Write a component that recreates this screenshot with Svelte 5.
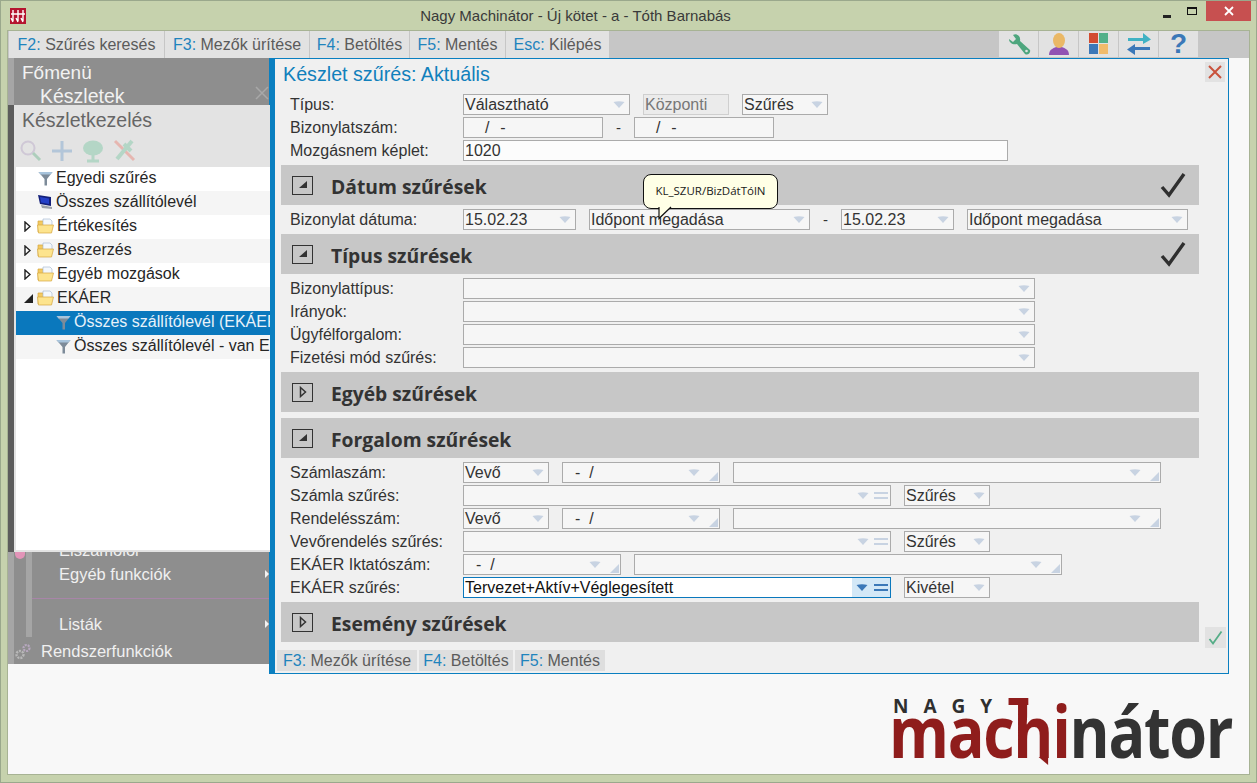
<script>
  const tree = [
    { t: 'Egyedi szűrés', icon: 'funnel', indent: 0 },
    { t: 'Összes szállítólevél', icon: 'pc', indent: 0 },
    { t: 'Értékesítés', icon: 'folder', arrow: 'r', indent: 0 },
    { t: 'Beszerzés', icon: 'folder', arrow: 'r', indent: 0 },
    { t: 'Egyéb mozgások', icon: 'folder', arrow: 'r', indent: 0 },
    { t: 'EKÁER', icon: 'folder', arrow: 'd', indent: 0 },
    { t: 'Összes szállítólevél (EKÁER)', icon: 'funnel', indent: 1, sel: true },
    { t: 'Összes szállítólevél - van EKÁER', icon: 'funnel', indent: 1 }
  ];
  const topKeys = [
    ['F2:', 'Szűrés keresés'],
    ['F3:', 'Mezők ürítése'],
    ['F4:', 'Betöltés'],
    ['F5:', 'Mentés'],
    ['Esc:', 'Kilépés']
  ];
  const bottomKeys = [
    ['F3:', 'Mezők ürítése'],
    ['F4:', 'Betöltés'],
    ['F5:', 'Mentés']
  ];
</script>

{#snippet dd()}
  <svg class="dd" width="12" height="7" viewBox="0 0 12 7"><path d="M0.5 1 Q6 -0.5 11.5 1 L6 7 Z" /></svg>
{/snippet}
{#snippet corner()}
  <svg class="corner" width="9" height="9" viewBox="0 0 9 9"><path d="M9 0 V9 H0 Z" /></svg>
{/snippet}
{#snippet eq()}
  <svg class="eq" width="14" height="7" viewBox="0 0 14 7"><path d="M0 0 H14 V2 H0 Z M0 5 H14 V7 H0 Z" /></svg>
{/snippet}

{#snippet field(w, text = '', opts = {})}
  <div class="field {w}" class:pad={opts.pad} class:pad2={opts.pad2} class:dis={opts.dis} class:white={opts.white}>
    <span class="val">{text}</span>
    {#if opts.dd}{@render dd()}{/if}
    {#if opts.eq}{@render eq()}{/if}
    {#if opts.corner}{@render corner()}{/if}
  </div>
{/snippet}

{#snippet bar(title, open, check)}
  <div class="bar">
    <span class="toggle">
      {#if open}
        <svg width="10" height="8" viewBox="0 0 10 8"><path d="M9 0 V7 H1 Z" fill="#333" /></svg>
      {:else}
        <svg width="8" height="12" viewBox="0 0 8 12"><path d="M1.5 1.5 L6.5 6 L1.5 10.5 Z" fill="none" stroke="#333" stroke-width="1.5" /></svg>
      {/if}
    </span>
    <span class="bar-title">{title}</span>
    {#if check}
      <svg class="bar-check" width="26" height="26" viewBox="0 0 26 26"><path d="M2 15 L9 23 L24 2" fill="none" stroke="#2f2f2f" stroke-width="3.4" /></svg>
    {/if}
  </div>
{/snippet}

{#snippet funnel()}
  <svg class="ti fn" width="15" height="15" viewBox="0 0 15 15">
    <path d="M0.5 1 H14.5 L9 8 V14.5 H6.5 V8 Z" fill="#7d8b99" />
    <path d="M0.5 1 H14.5 L12.5 3.5 H2.5 Z" fill="#a8c4dc" />
  </svg>
{/snippet}
{#snippet pc()}
  <svg class="ti" width="16" height="16" viewBox="0 0 16 16">
    <path d="M1 1 L14 3 V12 L3 10 Z" fill="#14207a" />
    <path d="M3 3 L12 4.5 V10 L4 8.5 Z" fill="#2540c8" />
    <path d="M4 11 L15 13 V15 L5 14 Z" fill="#9aa0a8" />
  </svg>
{/snippet}
{#snippet folder()}
  <svg class="ti" width="17" height="16" viewBox="0 0 17 16">
    <path d="M1 3 H6 L7 5 H14 V14 H1 Z" fill="#f3c960" stroke="#d5a640" stroke-width="0.7" />
    <path d="M6 1 H13 L15 3 V9 H6 Z" fill="#f4f8fc" stroke="#9db4cc" stroke-width="0.6" />
    <path d="M0.5 7 H16.5 L14.5 15 H1.5 Z" fill="#fde48e" stroke="#d5a640" stroke-width="0.7" />
  </svg>
{/snippet}

<div class="window">
  <header class="titlebar">
    <svg class="appicon" width="16" height="16" viewBox="0 0 16 16">
      <rect width="16" height="16" fill="#b5142f" />
      <path d="M3 2 V13 M8 2 V13 M13 2 V13 M1 6 H15 M1 10 L3 14 M6 10 L8 14 M11 10 L13 14" stroke="#fff" stroke-width="1.4" fill="none" />
    </svg>
    <span class="wintitle">Nagy Machinátor - Új kötet - a - Tóth Barnabás</span>
    <div class="winbtns">
      <span class="wb min"></span>
      <span class="wb max"></span>
      <span class="wb close">
        <svg width="10" height="10" viewBox="0 0 10 10"><path d="M1 1 L9 9 M9 1 L1 9" stroke="#fff" stroke-width="1.8" /></svg>
      </span>
    </div>
  </header>

  <div class="client">
    <nav class="toolbar">
      {#each topKeys as k}
        <span class="key"><b>{k[0]}</b> {k[1]}</span>
      {/each}
      <div class="tools">
        <span class="tool">
          <svg width="26" height="26" viewBox="0 0 26 26"><path d="M3 8 L7 11 L10 8 L7 4 C11 2 15 5 14 10 L24 19 C25 21 22 25 19 23 L11 13 C7 14 3 12 3 8 Z" fill="#4ea67e" /><circle cx="20.5" cy="20" r="1.3" fill="#e2e2e2" /></svg>
        </span>
        <span class="tool">
          <svg width="24" height="24" viewBox="0 0 24 24"><path d="M2 23 C2 17 7 16 9 15 H15 C17 16 22 17 22 23 Z" fill="#9152b3" /><ellipse cx="12" cy="8.5" rx="6" ry="7.5" fill="#eab866" /></svg>
        </span>
        <span class="tool">
          <svg width="24" height="24" viewBox="0 0 24 24"><rect x="2" y="1" width="9" height="10" fill="#d24b30" /><rect x="12" y="1" width="9" height="10" fill="#52b08a" /><rect x="2" y="12" width="9" height="10" fill="#3b78b8" /><rect x="12" y="12" width="9" height="10" fill="#f1bb6b" /></svg>
        </span>
        <span class="tool">
          <svg width="26" height="24" viewBox="0 0 26 24"><path d="M2 6 H17 V1 L25 7.5 L17 12 V9 H2 Z" fill="#3fb2c4" /><path d="M24 15 H9 V12 L1 17.5 L9 23 V18 H24 Z" fill="#3b78b8" /></svg>
        </span>
        <span class="tool q">?</span>
      </div>
    </nav>

    <main class="body">
      <aside class="sidebar">
        <div class="menu-top">
          <div class="mt1">Főmenü</div>
          <div class="mt2">Készletek</div>
          <svg class="menu-x" width="14" height="14" viewBox="0 0 14 14"><path d="M1 1 L13 13 M13 1 L1 13" stroke="#a8a8a8" stroke-width="1.5" /></svg>
        </div>
        <section class="panel">
          <div class="panel-head">Készletkezelés</div>
          <div class="panel-tools">
            <svg width="24" height="24" viewBox="0 0 24 24"><circle cx="9" cy="9" r="6.5" fill="none" stroke="#c9bfd2" stroke-width="2" /><path d="M14 14 L21 21" stroke="#9cc8b0" stroke-width="3" /></svg>
            <svg width="24" height="24" viewBox="0 0 24 24"><path d="M12 2 V22 M2 12 H22" stroke="#a3bdd6" stroke-width="3" /></svg>
            <svg width="24" height="24" viewBox="0 0 24 24"><ellipse cx="12" cy="9" rx="10" ry="7.5" fill="#a5d2bd" /><path d="M12 12 V21 M6 22 H18" stroke="#a5d2bd" stroke-width="3" /></svg>
            <svg width="24" height="24" viewBox="0 0 24 24"><path d="M3 2 L22 21" stroke="#e8a8a0" stroke-width="3" /><path d="M20 2 L5 20 M12 5 L19 12" stroke="#a5d2bd" stroke-width="4" /></svg>
          </div>
          <ul class="tree">
            {#each tree as n}
              <li class="node" class:sel={n.sel} class:ind={n.indent}>
                <span class="tw">
                  {#if n.arrow === 'r'}
                    <svg width="7" height="11" viewBox="0 0 7 11"><path d="M1 1 L6 5.5 L1 10 Z" fill="#fff" stroke="#222" stroke-width="1.4" /></svg>
                  {:else if n.arrow === 'd'}
                    <svg width="9" height="9" viewBox="0 0 9 9"><path d="M9 0 V9 H0 Z" fill="#222" /></svg>
                  {/if}
                </span>
                {#if n.icon === 'funnel'}{@render funnel()}{:else if n.icon === 'pc'}{@render pc()}{:else}{@render folder()}{/if}
                <span class="nt">{n.t}</span>
              </li>
            {/each}
          </ul>
        </section>
        <div class="menu-bottom">
          <div class="strip"></div>
          <div class="mb clipped">Elszámolói</div>
          <div class="mb first">Egyéb funkciók <i class="tri"></i></div>
          <div class="sep"></div>
          <div class="mb">Listák <i class="tri"></i></div>
          <div class="mb root">
            <svg width="16" height="17" viewBox="0 0 16 17"><circle cx="5" cy="11.5" r="3.5" fill="none" stroke="#b8b8b8" stroke-width="2.4" stroke-dasharray="2 1" /><circle cx="11.5" cy="5" r="3" fill="none" stroke="#b8a8c0" stroke-width="2.2" stroke-dasharray="2 1" /></svg>
            <span>Rendszerfunkciók</span>
          </div>
          <span class="pink"></span>
        </div>
      </aside>

      <div class="logo">
        <div class="logo-nagy">NAGY</div>
        <div class="logo-word"><span class="red">mac<span class="hh">h</span>i</span>nátor</div>
      </div>
    </main>

    <section class="dialog">
      <h1 class="dlg-title">Készlet szűrés: Aktuális</h1>
      <span class="dlg-x">
        <svg width="14" height="14" viewBox="0 0 14 14"><path d="M1 1 L13 13 M13 1 L1 13" stroke="#c9523c" stroke-width="2" /></svg>
      </span>
      <span class="dlg-ok">
        <svg width="15" height="15" viewBox="0 0 15 15"><path d="M1.5 9 L5 13.5 L13.5 1.5" fill="none" stroke="#55ad87" stroke-width="1.8" /></svg>
      </span>

      <div class="form">
        <div class="row">
          <label>Típus:</label>
          {@render field('w167', 'Választható', { dd: true })}
          {@render field('w86', 'Központi', { dis: true })}
          {@render field('w86', 'Szűrés', { dd: true })}
        </div>
        <div class="row">
          <label>Bizonylatszám:</label>
          {@render field('w140', '/  -', { pad2: true })}
          <span class="dash">-</span>
          {@render field('w140', '/  -', { pad2: true })}
        </div>
        <div class="row">
          <label>Mozgásnem képlet:</label>
          {@render field('w545', '1020', { white: true })}
        </div>

        {@render bar('Dátum szűrések', true, true)}
        <div class="row">
          <label>Bizonylat dátuma:</label>
          {@render field('w113', '15.02.23', { dd: true })}
          {@render field('w221', 'Időpont megadása', { dd: true })}
          <span class="dash">-</span>
          {@render field('w113', '15.02.23', { dd: true })}
          {@render field('w221', 'Időpont megadása', { dd: true })}
        </div>

        {@render bar('Típus szűrések', true, true)}
        {#each ['Bizonylattípus:', 'Irányok:', 'Ügyfélforgalom:', 'Fizetési mód szűrés:'] as l}
          <div class="row">
            <label>{l}</label>
            {@render field('w572', '', { dd: true })}
          </div>
        {/each}

        {@render bar('Egyéb szűrések', false, false)}
        {@render bar('Forgalom szűrések', true, false)}

        <div class="row">
          <label>Számlaszám:</label>
          {@render field('w86', 'Vevő', { dd: true })}
          {@render field('w158', '-  /', { dd: true, corner: true, pad: true })}
          {@render field('w428', '', { dd: true, corner: true })}
        </div>
        <div class="row">
          <label>Számla szűrés:</label>
          {@render field('w428', '', { dd: true, eq: true })}
          {@render field('w86', 'Szűrés', { dd: true })}
        </div>
        <div class="row">
          <label>Rendelésszám:</label>
          {@render field('w86', 'Vevő', { dd: true })}
          {@render field('w158', '-  /', { dd: true, corner: true, pad: true })}
          {@render field('w428', '', { dd: true, corner: true })}
        </div>
        <div class="row">
          <label>Vevőrendelés szűrés:</label>
          {@render field('w428', '', { dd: true, eq: true })}
          {@render field('w86', 'Szűrés', { dd: true })}
        </div>
        <div class="row">
          <label>EKÁER Iktatószám:</label>
          {@render field('w158', '-  /', { dd: true, corner: true, pad: true })}
          {@render field('w428', '', { dd: true, corner: true })}
        </div>
        <div class="row">
          <label>EKÁER szűrés:</label>
          <div class="field w428 active">
            <span class="val">Tervezet+Aktív+Véglegesített</span>
            <span class="act-btns">
              {@render dd()}
              {@render eq()}
            </span>
          </div>
          {@render field('w86', 'Kivétel', { dd: true })}
        </div>

        {@render bar('Esemény szűrések', false, false)}
      </div>

      <div class="dlg-keys">
        {#each bottomKeys as k}
          <span class="key small"><b>{k[0]}</b> {k[1]}</span>
        {/each}
      </div>

      <div class="tooltip">
        KL_SZUR/BizDátTólN
        <svg class="tail" width="16" height="13" viewBox="0 0 16 13"><path d="M1 0 V11.5 L13 0" fill="#ffffe6" stroke="#111" stroke-width="1.2" /></svg>
      </div>
    </section>
  </div>
</div>

<style>
  :global(body) {
    margin: 0;
    background: #c6d2ad;
    font-family: "Liberation Sans", Arial, sans-serif;
  }
  .window {
    width: 1257px;
    height: 783px;
    box-sizing: border-box;
    border: 1px solid #9aa88c;
    background: #c6d2ad;
    padding: 0 6px 7px;
    display: flex;
    flex-direction: column;
    overflow: hidden;
  }
  .titlebar {
    height: 29px;
    flex: none;
    position: relative;
    display: flex;
    align-items: flex-start;
    justify-content: center;
    padding-right: 106px;
  }
  .appicon {
    position: absolute;
    left: 3px;
    top: 7px;
  }
  .wintitle {
    font-size: 15px;
    line-height: 30px;
    color: #3a3a3a;
  }
  .winbtns {
    position: absolute;
    right: -1px;
    top: 0;
    display: flex;
    align-items: center;
  }
  .wb {
    display: block;
    flex: none;
  }
  .min {
    width: 8px;
    height: 3px;
    background: #222;
    margin: 11px 16px 0 0;
  }
  .max {
    width: 8px;
    height: 5px;
    border: 1px solid #111;
    border-top-width: 2px;
    margin: 0 9px 0 0;
  }
  .close {
    width: 45px;
    height: 20px;
    background: #c75050;
    display: flex;
    align-items: center;
    justify-content: center;
  }
  .client {
    flex: 1;
    position: relative;
    background: #f8f8f8;
    border: 1px solid #a7b394;
    min-height: 0;
    display: flex;
    flex-direction: column;
  }
  .toolbar {
    height: 27px;
    flex: none;
    background: #c6c6c6;
    display: grid;
    grid-template-columns: 155px 144px 99px 95px 103px;
    gap: 1px;
    padding-left: 1px;
    align-items: stretch;
  }
  .key {
    background: #e2e2e2;
    font-size: 16px;
    line-height: 27px;
    text-align: center;
    color: #5b5b5b;
    white-space: nowrap;
    display: block;
  }
  .key b {
    font-weight: normal;
    color: #1f84bd;
  }
  .tools {
    position: absolute;
    left: 991px;
    top: 0;
    height: 27px;
    display: flex;
    gap: 1px;
  }
  .tool {
    width: 39px;
    height: 26px;
    background: #e2e2e2;
    display: flex;
    align-items: center;
    justify-content: center;
  }
  .q {
    font-size: 28px;
    font-weight: bold;
    color: #3b78b8;
  }
  .body {
    flex: 1;
    display: flex;
    min-height: 0;
  }
  .sidebar {
    width: 262px;
    height: 606px;
    flex: none;
    display: flex;
    flex-direction: column;
    background: #8e8e8e;
    overflow: hidden;
  }
  .menu-top {
    height: 47px;
    flex: none;
    border-left: 6px solid #a6a6a6;
    position: relative;
    color: #f2f2f2;
    font-size: 19px;
    overflow: hidden;
  }
  .mt1 {
    padding-left: 8px;
    line-height: 24px;
    margin-top: 3px;
  }
  .mt2 {
    padding-left: 26px;
    line-height: 22px;
    font-size: 19.5px;
  }
  .menu-x {
    position: absolute;
    left: 241px;
    top: 28px;
  }
  .panel {
    height: 447px;
    flex: none;
    background: #e3e3e3;
    border-left: 6px solid #5c5c5c;
    padding-bottom: 2px;
    box-sizing: border-box;
    display: flex;
    flex-direction: column;
    position: relative;
    z-index: 1;
  }
  .panel-head {
    font-size: 19.5px;
    color: #666;
    padding-left: 8px;
    line-height: 30px;
  }
  .panel-tools {
    height: 32px;
    display: flex;
    align-items: center;
    gap: 7px;
    padding-left: 5px;
  }
  .panel-tools svg {
    opacity: 0.75;
  }
  .tree {
    flex: 1;
    margin: 0 0 0 2px;
    padding: 0;
    list-style: none;
    background: #fff;
    overflow: hidden;
  }
  .node {
    height: 24px;
    box-sizing: border-box;
    padding-bottom: 2px;
    display: flex;
    align-items: center;
    white-space: nowrap;
    font-size: 16px;
    color: #262626;
  }
  .node:nth-child(even) {
    background: #f5f5f5;
  }
  .node.sel {
    background: #0a78bd;
    color: #e8f2fa;
  }
  .tw {
    width: 21px;
    flex: none;
    display: flex;
    box-sizing: border-box;
    padding-left: 8px;
    justify-content: flex-start;
  }
  .node.ind .tw {
    width: 39px;
  }
  .ti {
    flex: none;
    margin-right: 3px;
  }
  .fn {
    margin-left: 1px;
  }
  .menu-bottom {
    flex: 1;
    position: relative;
    border-left: 6px solid #a6a6a6;
    color: #f0f0f0;
    font-size: 16.5px;
  }
  .strip {
    position: absolute;
    left: 12px;
    top: 0;
    width: 6px;
    height: 85px;
    background: #a5a5a5;
  }
  .mb {
    padding-left: 45px;
    line-height: 22px;
    position: relative;
  }
  .clipped {
    position: absolute;
    left: 0;
    top: -13px;
  }
  .first {
    margin-top: 11px;
  }
  .tri {
    position: absolute;
    left: 251px;
    top: 7px;
    border-left: 4px solid #f2f2f2;
    border-top: 4px solid transparent;
    border-bottom: 4px solid transparent;
  }
  .sep {
    height: 1px;
    margin: 13px 0 14px 18px;
    background: #a885a8;
  }
  .root {
    margin-top: 5px;
    padding-left: 1px;
    display: flex;
    align-items: center;
    gap: 10px;
  }
  .pink {
    position: absolute;
    left: 1px;
    top: 0;
    width: 10px;
    height: 7px;
    background: #e294b8;
    border-radius: 0 0 5px 5px;
  }
  .logo {
    margin-left: auto;
    margin-right: 16px;
    margin-bottom: 7px;
    align-self: flex-end;
    color: #333;
    font-family: "Open Sans", sans-serif;
    position: relative;
    width: 340px;
  }
  .logo-nagy {
    font-weight: 700;
    font-size: 19px;
    line-height: 18px;
    letter-spacing: 15px;
    color: #2f2f2f;
    margin-bottom: -20px;
  }
  .logo-word {
    font-size: 71px;
    font-weight: 700;
    line-height: 72px;
    letter-spacing: -1.5px;
    white-space: nowrap;
    margin-left: -4px;
    transform: scaleX(0.86);
    transform-origin: left center;
  }
  .red {
    color: #8f1d1c;
  }
  .hh {
    position: relative;
  }
  .hh::before {
    content: "";
    position: absolute;
    left: -6px;
    top: 16px;
    width: 23px;
    height: 7px;
    background: #8f1d1c;
  }
  .hh::after {
    content: "";
    position: absolute;
    left: 29px;
    bottom: 14px;
    width: 0;
    height: 0;
    border-right: 11px solid #8f1d1c;
    border-bottom: 8px solid transparent;
  }
  .dialog {
    position: absolute;
    left: 261px;
    top: 27px;
    width: 960px;
    height: 616px;
    box-sizing: border-box;
    background: #f0f0f0;
    border: 1px solid #0a7fc0;
    border-left-width: 6px;
    display: flex;
    flex-direction: column;
  }
  .dlg-title {
    margin: 0;
    height: 30px;
    padding-left: 8px;
    font-weight: normal;
    font-size: 19.7px;
    line-height: 30px;
    color: #1180bc;
    flex: none;
  }
  .dlg-x {
    position: absolute;
    right: 3px;
    top: 3px;
    width: 20px;
    height: 20px;
    background: #e2e2e2;
    display: flex;
    align-items: center;
    justify-content: center;
  }
  .dlg-ok {
    position: absolute;
    right: 2px;
    top: 568px;
    width: 21px;
    height: 21px;
    background: #e2e2e2;
    display: flex;
    align-items: center;
    justify-content: center;
  }
  .form {
    padding-left: 6px;
    width: 918px;
    box-sizing: content-box;
    margin-top: 5px;
    flex: none;
  }
  .row {
    height: 23px;
    display: flex;
    align-items: flex-start;
    gap: 13px;
    padding-left: 9px;
  }
  .row label {
    width: 173px;
    margin-right: -13px;
    font-size: 16px;
    line-height: 21px;
    color: #333;
    flex: none;
    white-space: nowrap;
  }
  .field {
    height: 21px;
    box-sizing: border-box;
    border: 1px solid #ababab;
    background: #f6f6f6;
    font-size: 16px;
    line-height: 19px;
    color: #333;
    padding-left: 1px;
    display: flex;
    align-items: center;
    flex: none;
    position: relative;
    white-space: pre;
  }
  .val {
    flex: 1;
    min-width: 0;
  }
  .pad .val {
    padding-left: 11px;
  }
  .pad2 .val {
    padding-left: 20px;
    word-spacing: 1px;
  }
  .field.white {
    background: #fcfcfc;
  }
  .field.dis {
    background: #ebebeb;
    border-color: #cfcfcf;
    color: #777;
  }
  .field.active {
    background: #fff;
    border-color: #0a78bd;
    color: #111;
  }
  .act-btns {
    align-self: stretch;
    background: #d3e8f7;
    width: 38px;
    margin-left: auto;
    display: flex;
    align-items: center;
    gap: 5px;
    padding-left: 4px;
    box-sizing: border-box;
    flex: none;
  }
  .dd {
    flex: none;
    margin-right: 4px;
  }
  .dd path {
    fill: #c8d3e2;
  }
  .corner {
    flex: none;
    margin: 8px 1px 0 5px;
  }
  .corner path {
    fill: #c8d3e2;
  }
  .eq {
    flex: none;
    margin: 0 2px 0 1px;
  }
  .eq path {
    fill: #c8d3e2;
  }
  .active .dd path,
  .active .eq path {
    fill: #3b78b8;
  }
  .active .dd {
    margin-right: 0;
  }
  .dash {
    width: 5px;
    flex: none;
    text-align: center;
    font-size: 15px;
    line-height: 21px;
    color: #333;
  }
  .w86 { width: 86px; }
  .w113 { width: 113px; }
  .w140 { width: 140px; }
  .w158 { width: 158px; }
  .w167 { width: 167px; }
  .w221 { width: 221px; }
  .w428 { width: 428px; }
  .w545 { width: 545px; }
  .w572 { width: 572px; }
  .bar {
    height: 40px;
    margin-bottom: 4px;
    background: #c7c7c7;
    display: flex;
    align-items: center;
    position: relative;
  }
  .row + .bar {
    margin-top: 2px;
  }
  .bar + .bar {
    margin-top: 6px;
  }
  .toggle {
    width: 21px;
    height: 19px;
    border: 1px solid #333;
    margin-left: 11px;
    margin-right: 18px;
    display: flex;
    align-items: center;
    justify-content: center;
    box-sizing: border-box;
    flex: none;
  }
  .bar-title {
    font-family: "Open Sans", sans-serif;
    font-weight: 700;
    font-size: 19.3px;
    color: #333;
    padding-top: 2px;
  }
  .bar-check {
    position: absolute;
    right: 13px;
    top: 7px;
  }
  .dlg-keys {
    display: grid;
    grid-template-columns: 140px 94px 90px;
    gap: 2px;
    padding-left: 2px;
    margin-top: 4px;
    width: 400px;
  }
  .key.small {
    line-height: 21px;
    background: #dedede;
  }
  .tooltip {
    position: absolute;
    left: 368px;
    top: 115px;
    width: 135px;
    height: 35px;
    box-sizing: border-box;
    background: #ffffe6;
    border: 1.5px solid #111;
    border-radius: 8px;
    font-family: "Open Sans", sans-serif;
    font-size: 11.5px;
    line-height: 32px;
    text-align: center;
    color: #1a1a1a;
    white-space: nowrap;
    z-index: 3;
  }
  .tail {
    position: absolute;
    left: 14px;
    top: 32px;
    overflow: visible;
  }
</style>
